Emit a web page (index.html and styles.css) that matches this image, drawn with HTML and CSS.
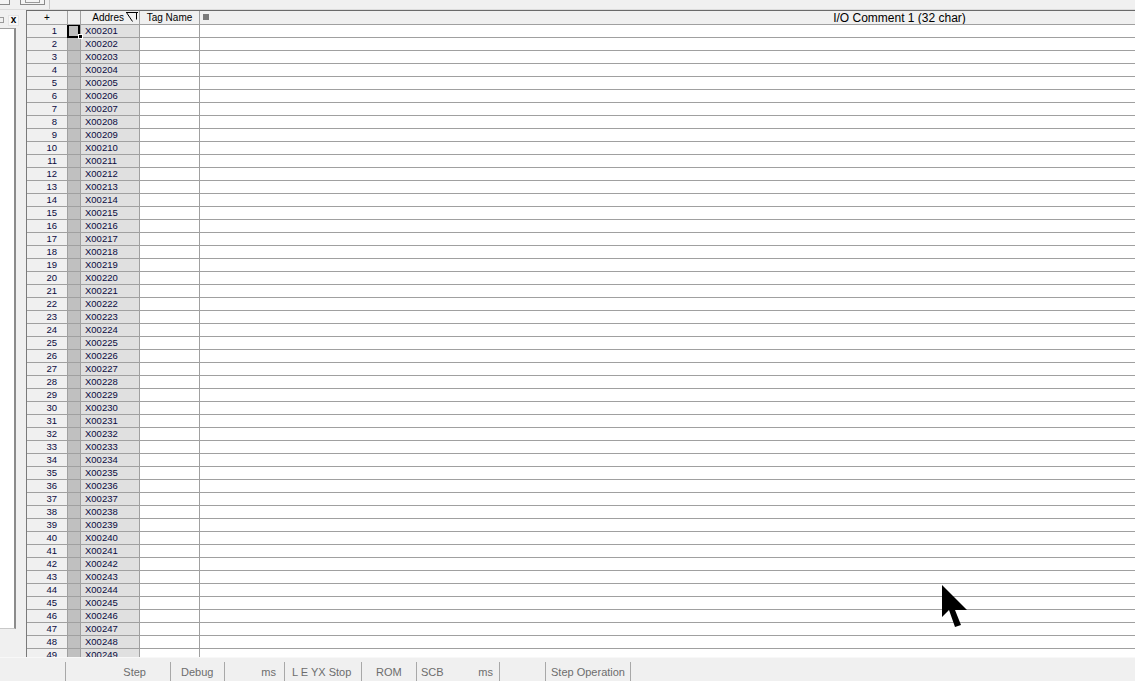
FILE: index.html
```html
<!DOCTYPE html>
<html>
<head>
<meta charset="utf-8">
<link rel="stylesheet" href="styles.css">
</head>
<body>
<div class="app">
  <div class="toolbar">
    <div class="tbtn tbtn-a"></div>
    <div class="tbtn tbtn-b"><div class="tbtn-in"></div></div>
    <div class="tsep"></div>
  </div>
  <div class="main">
    <div class="side">
      <div class="side-title">
        <span class="pin"></span>
        <span class="close">x</span>
      </div>
      <div class="side-box"></div>
    </div>
    <div class="grid">
      <div class="head">
        <div class="n">+</div>
        <div class="s"></div>
        <div class="a"><span>Addres</span><svg class="filt" width="12" height="10" viewBox="0 0 12 10"><path d="M0 0.5 H12 M0.5 0.5 L6.5 9.5 M10.5 0.5 V7.5" stroke="#000" stroke-width="1" fill="none"/></svg></div>
        <div class="t">Tag Name</div>
        <div class="c"><span class="sq"></span><span class="ctext">I/O Comment 1 (32 char)</span></div>
      </div>
      <div class="rows">
        <div class="row"><div class="n">1</div><div class="s sel"></div><div class="a">X00201</div><div class="t"></div><div class="c"></div></div>
        <div class="row"><div class="n">2</div><div class="s"></div><div class="a">X00202</div><div class="t"></div><div class="c"></div></div>
        <div class="row"><div class="n">3</div><div class="s"></div><div class="a">X00203</div><div class="t"></div><div class="c"></div></div>
        <div class="row"><div class="n">4</div><div class="s"></div><div class="a">X00204</div><div class="t"></div><div class="c"></div></div>
        <div class="row"><div class="n">5</div><div class="s"></div><div class="a">X00205</div><div class="t"></div><div class="c"></div></div>
        <div class="row"><div class="n">6</div><div class="s"></div><div class="a">X00206</div><div class="t"></div><div class="c"></div></div>
        <div class="row"><div class="n">7</div><div class="s"></div><div class="a">X00207</div><div class="t"></div><div class="c"></div></div>
        <div class="row"><div class="n">8</div><div class="s"></div><div class="a">X00208</div><div class="t"></div><div class="c"></div></div>
        <div class="row"><div class="n">9</div><div class="s"></div><div class="a">X00209</div><div class="t"></div><div class="c"></div></div>
        <div class="row"><div class="n">10</div><div class="s"></div><div class="a">X00210</div><div class="t"></div><div class="c"></div></div>
        <div class="row"><div class="n">11</div><div class="s"></div><div class="a">X00211</div><div class="t"></div><div class="c"></div></div>
        <div class="row"><div class="n">12</div><div class="s"></div><div class="a">X00212</div><div class="t"></div><div class="c"></div></div>
        <div class="row"><div class="n">13</div><div class="s"></div><div class="a">X00213</div><div class="t"></div><div class="c"></div></div>
        <div class="row"><div class="n">14</div><div class="s"></div><div class="a">X00214</div><div class="t"></div><div class="c"></div></div>
        <div class="row"><div class="n">15</div><div class="s"></div><div class="a">X00215</div><div class="t"></div><div class="c"></div></div>
        <div class="row"><div class="n">16</div><div class="s"></div><div class="a">X00216</div><div class="t"></div><div class="c"></div></div>
        <div class="row"><div class="n">17</div><div class="s"></div><div class="a">X00217</div><div class="t"></div><div class="c"></div></div>
        <div class="row"><div class="n">18</div><div class="s"></div><div class="a">X00218</div><div class="t"></div><div class="c"></div></div>
        <div class="row"><div class="n">19</div><div class="s"></div><div class="a">X00219</div><div class="t"></div><div class="c"></div></div>
        <div class="row"><div class="n">20</div><div class="s"></div><div class="a">X00220</div><div class="t"></div><div class="c"></div></div>
        <div class="row"><div class="n">21</div><div class="s"></div><div class="a">X00221</div><div class="t"></div><div class="c"></div></div>
        <div class="row"><div class="n">22</div><div class="s"></div><div class="a">X00222</div><div class="t"></div><div class="c"></div></div>
        <div class="row"><div class="n">23</div><div class="s"></div><div class="a">X00223</div><div class="t"></div><div class="c"></div></div>
        <div class="row"><div class="n">24</div><div class="s"></div><div class="a">X00224</div><div class="t"></div><div class="c"></div></div>
        <div class="row"><div class="n">25</div><div class="s"></div><div class="a">X00225</div><div class="t"></div><div class="c"></div></div>
        <div class="row"><div class="n">26</div><div class="s"></div><div class="a">X00226</div><div class="t"></div><div class="c"></div></div>
        <div class="row"><div class="n">27</div><div class="s"></div><div class="a">X00227</div><div class="t"></div><div class="c"></div></div>
        <div class="row"><div class="n">28</div><div class="s"></div><div class="a">X00228</div><div class="t"></div><div class="c"></div></div>
        <div class="row"><div class="n">29</div><div class="s"></div><div class="a">X00229</div><div class="t"></div><div class="c"></div></div>
        <div class="row"><div class="n">30</div><div class="s"></div><div class="a">X00230</div><div class="t"></div><div class="c"></div></div>
        <div class="row"><div class="n">31</div><div class="s"></div><div class="a">X00231</div><div class="t"></div><div class="c"></div></div>
        <div class="row"><div class="n">32</div><div class="s"></div><div class="a">X00232</div><div class="t"></div><div class="c"></div></div>
        <div class="row"><div class="n">33</div><div class="s"></div><div class="a">X00233</div><div class="t"></div><div class="c"></div></div>
        <div class="row"><div class="n">34</div><div class="s"></div><div class="a">X00234</div><div class="t"></div><div class="c"></div></div>
        <div class="row"><div class="n">35</div><div class="s"></div><div class="a">X00235</div><div class="t"></div><div class="c"></div></div>
        <div class="row"><div class="n">36</div><div class="s"></div><div class="a">X00236</div><div class="t"></div><div class="c"></div></div>
        <div class="row"><div class="n">37</div><div class="s"></div><div class="a">X00237</div><div class="t"></div><div class="c"></div></div>
        <div class="row"><div class="n">38</div><div class="s"></div><div class="a">X00238</div><div class="t"></div><div class="c"></div></div>
        <div class="row"><div class="n">39</div><div class="s"></div><div class="a">X00239</div><div class="t"></div><div class="c"></div></div>
        <div class="row"><div class="n">40</div><div class="s"></div><div class="a">X00240</div><div class="t"></div><div class="c"></div></div>
        <div class="row"><div class="n">41</div><div class="s"></div><div class="a">X00241</div><div class="t"></div><div class="c"></div></div>
        <div class="row"><div class="n">42</div><div class="s"></div><div class="a">X00242</div><div class="t"></div><div class="c"></div></div>
        <div class="row"><div class="n">43</div><div class="s"></div><div class="a">X00243</div><div class="t"></div><div class="c"></div></div>
        <div class="row"><div class="n">44</div><div class="s"></div><div class="a">X00244</div><div class="t"></div><div class="c"></div></div>
        <div class="row"><div class="n">45</div><div class="s"></div><div class="a">X00245</div><div class="t"></div><div class="c"></div></div>
        <div class="row"><div class="n">46</div><div class="s"></div><div class="a">X00246</div><div class="t"></div><div class="c"></div></div>
        <div class="row"><div class="n">47</div><div class="s"></div><div class="a">X00247</div><div class="t"></div><div class="c"></div></div>
        <div class="row"><div class="n">48</div><div class="s"></div><div class="a">X00248</div><div class="t"></div><div class="c"></div></div>
        <div class="row"><div class="n">49</div><div class="s"></div><div class="a">X00249</div><div class="t"></div><div class="c"></div></div>
      </div>
    </div>
  </div>
  <div class="status">
    <div class="seg w1"></div>
    <div class="seg w2 right">Step</div>
    <div class="seg w3 pl10">Debug</div>
    <div class="seg w4 right pr8">ms</div>
    <div class="seg w5 pl7">L E YX Stop</div>
    <div class="seg w6 pl14">ROM</div>
    <div class="seg w7 split"><span>SCB</span><span>ms</span></div>
    <div class="seg w8"></div>
    <div class="seg w9 pl5">Step Operation</div>
  </div>
  <svg class="cursor" width="26" height="44" viewBox="0 0 26 44"><polygon points="0,0 0,32 7,25 13,42 19,40 13,25 25,25" fill="#000"/></svg>
</div>
</body>
</html>
```

FILE: styles.css
```css
html, body {
  margin: 0;
  padding: 0;
}
body {
  width: 1135px;
  height: 681px;
  overflow: hidden;
  background: #f0f0f0;
  font-family: "Liberation Sans", Arial, sans-serif;
  font-size: 11px;
  color: #000;
}
.app {
  position: relative;
  display: flex;
  flex-direction: column;
  height: 681px;
}
.toolbar {
  height: 10px;
  flex: none;
  display: flex;
  align-items: flex-start;
  box-sizing: border-box;
  border-bottom: 1px solid #dcdcdc;
}
.tbtn {
  box-sizing: border-box;
  height: 5px;
  border: 1px solid #8a8a8a;
  border-top: none;
  background: #f4f4f4;
}
.tbtn-a {
  width: 11px;
  margin-left: -1px;
}
.tbtn-b {
  width: 25px;
  margin-left: 10px;
  padding: 0 4px;
}
.tbtn-in {
  height: 2px;
  border: 1px solid #9a9a9a;
  border-top: none;
}
.tsep {
  width: 1px;
  height: 9px;
  background: #c8c8c8;
  margin-left: 4px;
}
.main {
  flex: none;
  height: 647px;
  display: flex;
}
.side {
  width: 26px;
  flex: none;
  display: flex;
  flex-direction: column;
}
.side-title {
  height: 18px;
  display: flex;
  align-items: center;
  padding-top: 2px;
  box-sizing: border-box;
}
.pin {
  width: 4px;
  height: 6px;
  border: 1px solid #9a9a9a;
  border-left: none;
  box-sizing: border-box;
}
.close {
  width: 11px;
  height: 11px;
  margin-left: 4px;
  box-sizing: border-box;
  border: 1px solid #e4e4e4;
  background: #f7f7f7;
  font-weight: bold;
  font-size: 10px;
  line-height: 8px;
  text-align: center;
}
.side-box {
  width: 18px;
  margin-left: -2px;
  height: 601px;
  box-sizing: border-box;
  background: #fff;
  border: 1px solid #a0a0a0;
  border-right: 2px solid #8c8c8c;
  border-bottom-color: #c8c8c8;
}
.grid {
  flex: 1;
  min-width: 0;
  overflow: hidden;
  border-left: 1px solid #7a7a7a;
  border-top: 1px solid #6a6a6a;
  background: #fff;
  display: flex;
  flex-direction: column;
}
.head, .row {
  display: flex;
  flex: none;
}
.head > div, .row > div {
  flex: none;
  box-sizing: border-box;
  border-right: 1px solid #a0a0a0;
  border-bottom: 1px solid #a0a0a0;
  white-space: nowrap;
  overflow: hidden;
}
.head > div {
  height: 14px;
  background: #f0f0f0;
  font-size: 10px;
  line-height: 12px;
  display: flex;
  align-items: center;
}
.row > div {
  height: 13px;
  line-height: 12px;
  font-size: 9.5px;
}
.rows {
  flex: 1;
  overflow: hidden;
}
.n {
  width: 41px;
  background: #f0f0f0;
  text-align: right;
  padding-right: 10px;
  color: #0a0a40;
}
.head > .n {
  justify-content: center;
  padding-right: 0;
  color: #000;
}
.s {
  width: 13px;
  background: #c0c0c0;
}
.head > .s {
  background: #f0f0f0;
}
.a {
  width: 59px;
  background: #e0e0e0;
  padding-left: 4px;
  color: #0a0a40;
}
.head > .a {
  background: #f0f0f0;
  justify-content: flex-end;
  padding-left: 0;
  padding-right: 1px;
  gap: 2px;
  color: #000;
}
.filt {
  display: block;
  margin-top: -1px;
}
.t {
  width: 60px;
}
.head > .t {
  justify-content: center;
}
.c {
  width: 1400px;
  position: relative;
}
.head > .c {
  justify-content: center;
  font-size: 12px;
}
.sq {
  position: absolute;
  left: 3px;
  top: 3px;
  width: 6px;
  height: 6px;
  background: #7a7a7a;
}
.sel {
  position: relative;
  overflow: visible !important;
}
.sel::after {
  content: "";
  position: absolute;
  left: -1px;
  top: -1px;
  width: 13px;
  height: 14px;
  box-sizing: border-box;
  border: 2px solid #000;
}
.sel::before {
  content: "";
  position: absolute;
  right: -3px;
  bottom: -2px;
  width: 3px;
  height: 3px;
  background: #000;
  border: 1px solid #fff;
  z-index: 2;
}
.status {
  flex: 1;
  display: flex;
  align-items: flex-end;
  color: #6d6d6d;
  font-size: 11px;
  border-top: 1px solid #f8f8f8;
}
.seg {
  flex: none;
  height: 19px;
  box-sizing: border-box;
  border-right: 1px solid #a8a8a8;
  display: flex;
  align-items: center;
  white-space: nowrap;
}
.w1 { width: 66px; }
.w2 { width: 105px; }
.w3 { width: 54px; }
.w4 { width: 60px; }
.w5 { width: 77px; }
.w6 { width: 55px; }
.w7 { width: 83px; }
.w8 { width: 46px; }
.w9 { width: 85px; }
.right { justify-content: flex-end; padding-right: 24px; }
.pr8 { padding-right: 8px; }
.pl5 { padding-left: 5px; }
.pl7 { padding-left: 7px; }
.pl10 { padding-left: 10px; }
.pl14 { padding-left: 14px; }
.split { justify-content: space-between; padding: 0 6px 0 4px; }
.cursor {
  position: absolute;
  left: 942px;
  top: 585px;
}
```
